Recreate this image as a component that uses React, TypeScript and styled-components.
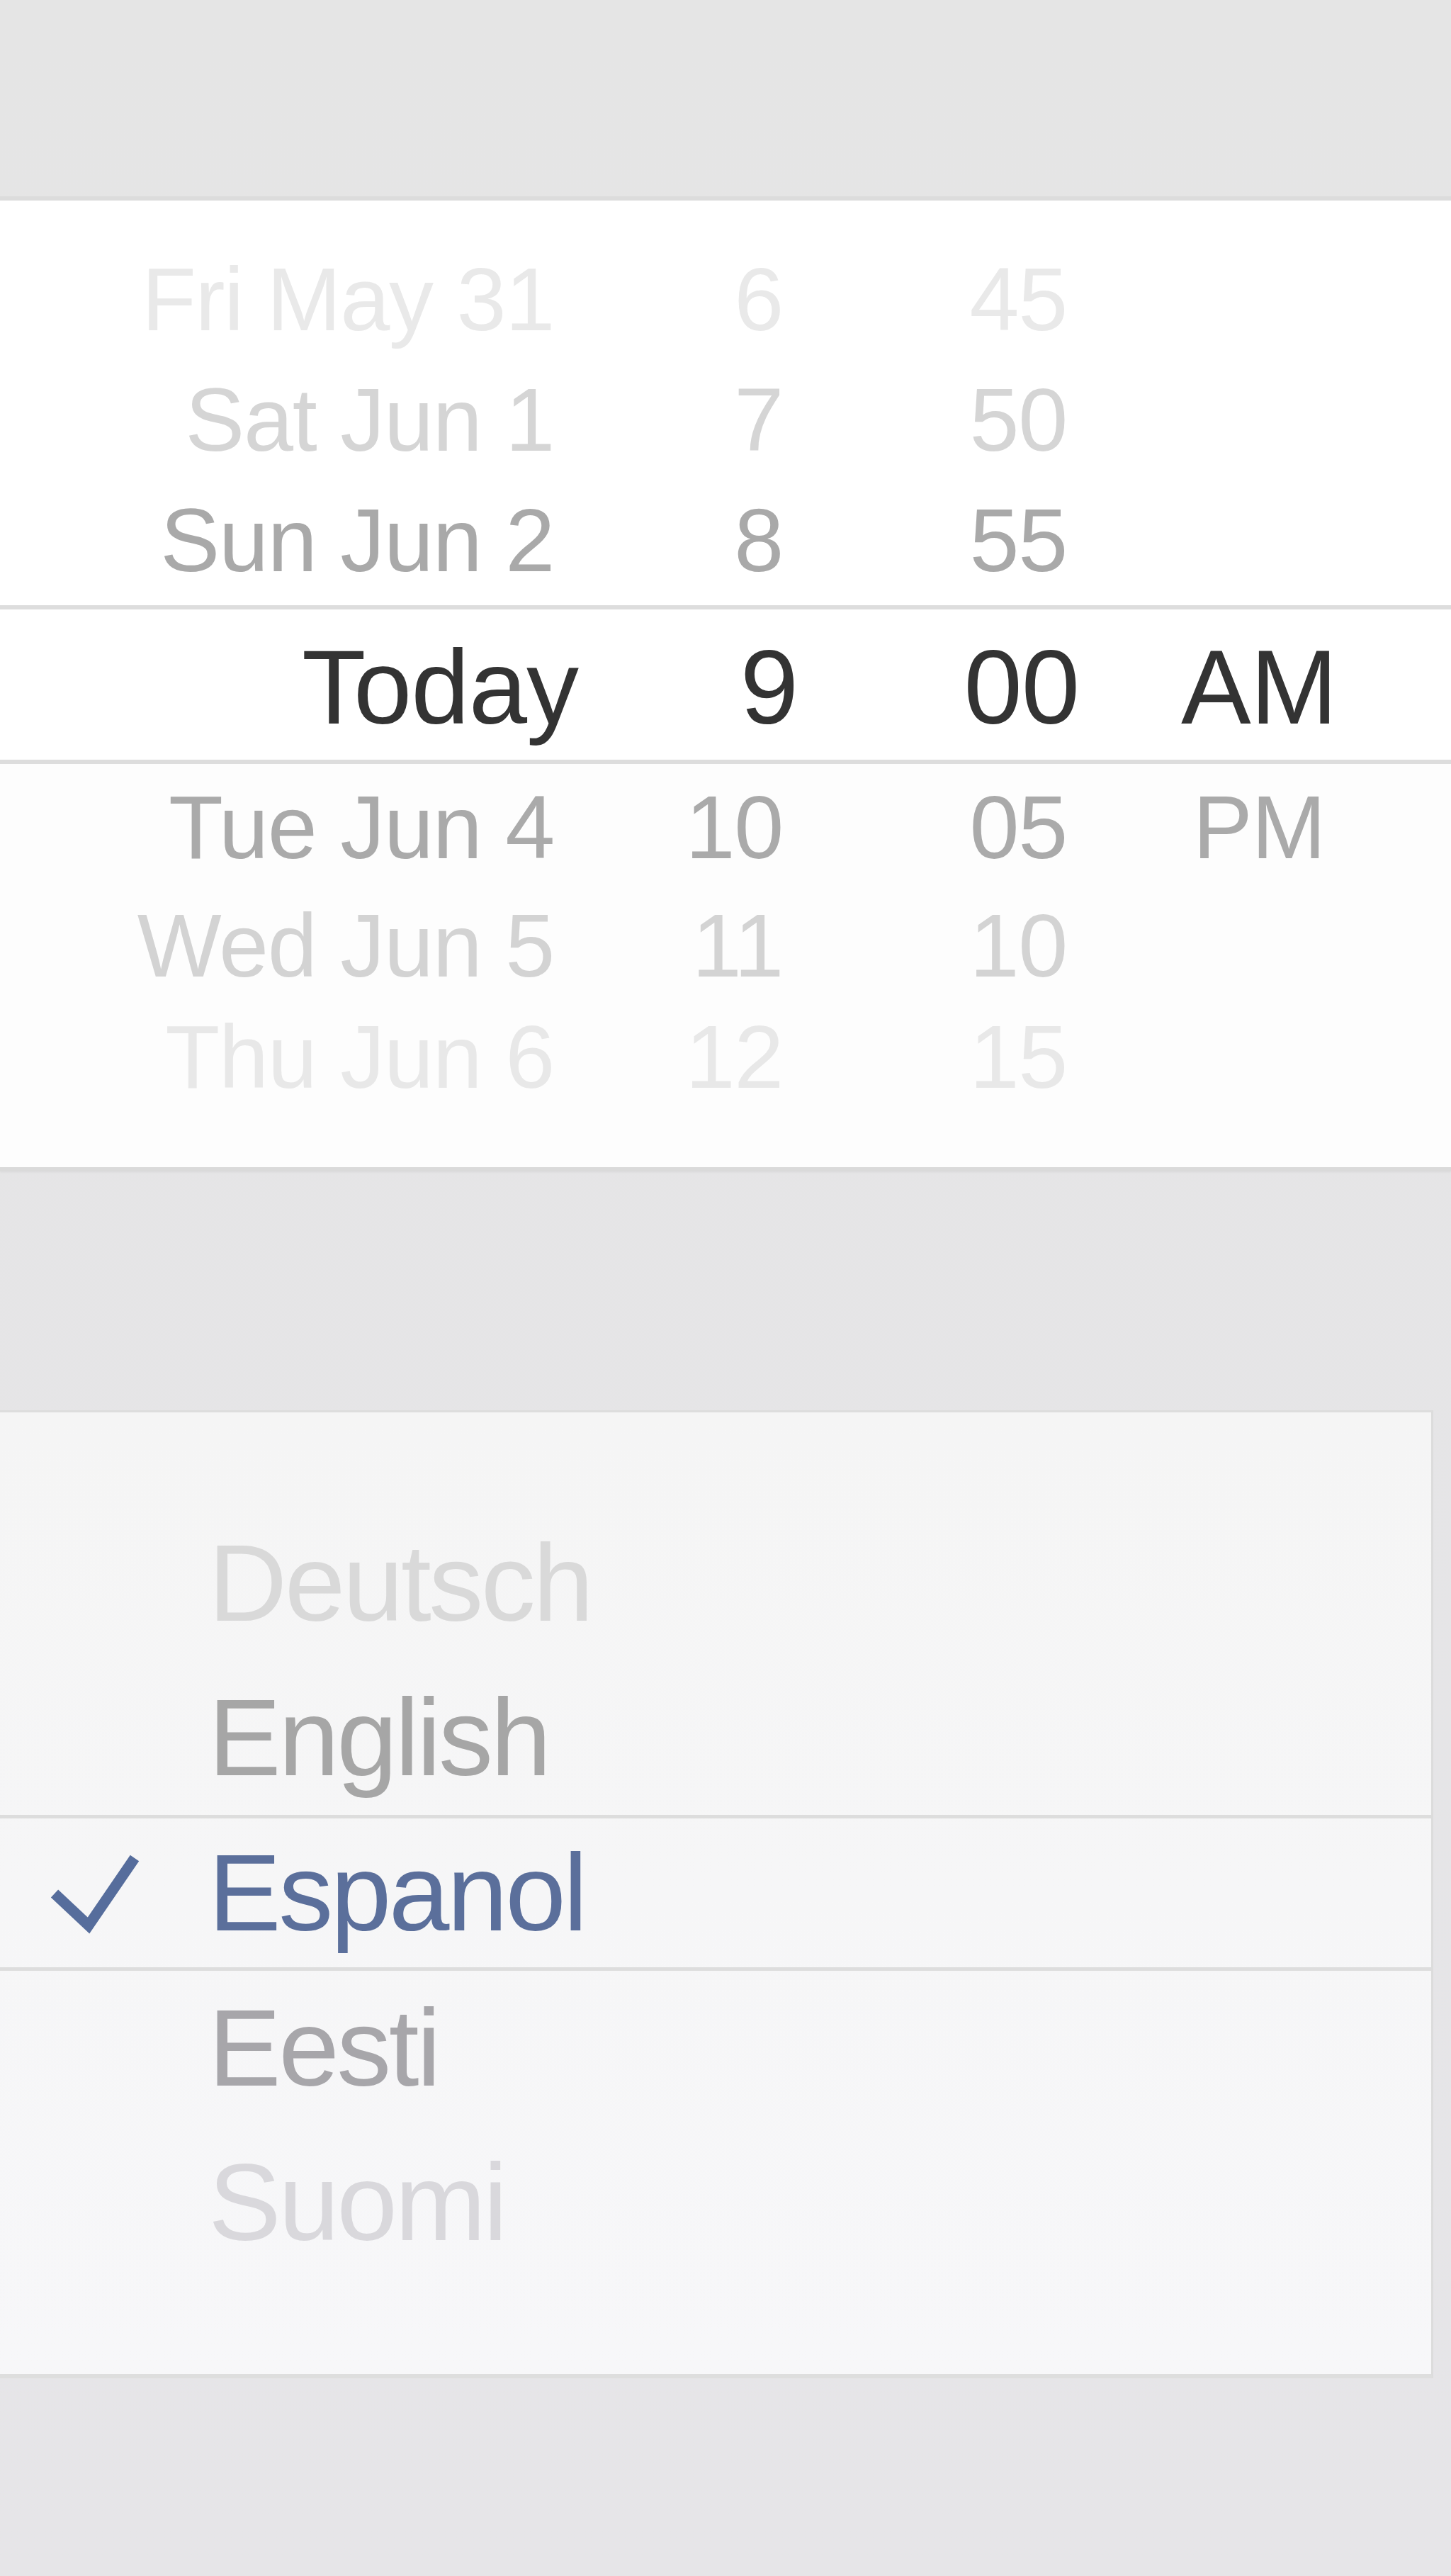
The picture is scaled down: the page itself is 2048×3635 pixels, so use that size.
import styled, { createGlobalStyle } from 'styled-components';

const GlobalStyle = createGlobalStyle`
    html, body {
        margin: 0;
        padding: 0;
        background: #e5e5e6;
    }
    #root {
        font-family: 'Liberation Sans', Arial, Helvetica, sans-serif;
    }
`;

const Page = styled.div`
    display: flex;
    flex-direction: column;
    width: 2048px;
    min-height: 3635px;
    background: linear-gradient(#e5e5e5, #e6e5e8);
`;

const Gap = styled.div<{ $h: number }>`
    height: ${(p) => p.$h}px;
    flex-shrink: 0;
`;

/* date / time wheel */

const Picker = styled.div`
    box-sizing: border-box;
    height: 1376px;
    display: flex;
    flex-direction: column;
    background: #ffffff;
    border-top: 6px solid #dcdcdc;
    border-bottom: 6px solid #dadada;
    box-shadow: 0 2px 2px rgba(0, 0, 0, 0.03);
`;

const WheelRow = styled.div<{ $h: number; $pt?: number }>`
    box-sizing: border-box;
    height: ${(p) => p.$h}px;
    padding-top: ${(p) => p.$pt || 0}px;
    display: grid;
    grid-template-columns: 782px 323px 401px 1fr;
    align-items: center;
    flex-shrink: 0;
`;

const Band = styled.div`
    border-top: 6px solid #dddddd;
    border-bottom: 6px solid #dddddd;
    background: #ffffff;
`;

const Lower = styled.div`
    flex: 1;
    display: flex;
    flex-direction: column;
    background: #fdfdfd;
`;

const Cell = styled.div<{ $tone: string; $big?: boolean; $shift?: number; $center?: boolean }>`
    font-size: ${(p) => (p.$big ? 148 : 126)}px;
    line-height: 1;
    letter-spacing: ${(p) => (p.$big ? -1 : -1.3)}px;
    color: ${(p) => p.$tone};
    text-align: ${(p) => (p.$center ? 'center' : 'right')};
    white-space: nowrap;
    transform: translateX(${(p) => p.$shift || 0}px);
`;

type Wheel = { date: string; hour: string; min: string; ampm?: string; tone: string; h: number };

const upper: Wheel[] = [
    { date: 'Fri May 31', hour: '6', min: '45', tone: '#e9e9e9', h: 170 },
    { date: 'Sat Jun 1', hour: '7', min: '50', tone: '#d5d5d5', h: 170 },
    { date: 'Sun Jun 2', hour: '8', min: '55', tone: '#a9a9a9', h: 170 },
];

const lower: Wheel[] = [
    { date: 'Tue Jun 4', hour: '10', min: '05', ampm: 'PM', tone: '#aaaaaa', h: 180 },
    { date: 'Wed Jun 5', hour: '11', min: '10', tone: '#d3d3d3', h: 154 },
    { date: 'Thu Jun 6', hour: '12', min: '15', tone: '#e8e8e8', h: 160 },
];

function WheelLine({ row }: { row: Wheel }) {
    return (
        <WheelRow $h={row.h}>
            <Cell $tone={row.tone}>{row.date}</Cell>
            <Cell $tone={row.tone}>{row.hour}</Cell>
            <Cell $tone={row.tone}>{row.min}</Cell>
            <Cell $tone={row.tone} $center>{row.ampm || ''}</Cell>
        </WheelRow>
    );
}

/* language list */

const LangPanel = styled.div`
    box-sizing: border-box;
    width: 2023px;
    height: 1366px;
    display: flex;
    flex-direction: column;
    padding: 132px 0 133px;
    background: linear-gradient(#f5f5f5, #f7f7f9);
    border-top: 3px solid #dddddd;
    border-right: 3px solid #dcdcdc;
    border-bottom: 6px solid #dedede;
`;

const LangRow = styled.div<{ $selected?: boolean }>`
    box-sizing: content-box;
    height: ${(p) => (p.$selected ? 210 : 218)}px;
    display: flex;
    align-items: center;
    flex-shrink: 0;
    border-top: ${(p) => (p.$selected ? '5px solid #dddddd' : 'none')};
    border-bottom: ${(p) => (p.$selected ? '5px solid #dddddd' : 'none')};
`;

const CheckSlot = styled.div`
    width: 294px;
    height: 130px;
    padding-left: 60px;
    box-sizing: border-box;
    display: flex;
    align-items: center;
`;

const LangLabel = styled.span<{ $tone: string }>`
    font-size: 154px;
    line-height: 1;
    letter-spacing: -3.5px;
    color: ${(p) => p.$tone};
`;

const Check = () => (
    <svg width="140" height="130" viewBox="0 0 140 130" fill="none">
        <path d="M17 66 L65 111 L130 16" stroke="#566d9c" strokeWidth="15" strokeLinejoin="miter" />
    </svg>
);

const langs = [
    { name: 'Deutsch', tone: '#d9d9d9' },
    { name: 'English', tone: '#a6a6a6' },
    { name: 'Espanol', tone: '#5b6f9b', selected: true },
    { name: 'Eesti', tone: '#a7a6aa' },
    { name: 'Suomi', tone: '#d9d8dc' },
];

export default function App() {
    return (
        <Page>
            <GlobalStyle />
            <Gap $h={277} />
            <Picker>
                <Gap $h={55} />
                {upper.map((r) => (
                    <WheelLine key={r.date} row={r} />
                ))}
                <Gap $h={6} />
                <Band>
                    <WheelRow $h={212} $pt={8}>
                        <Cell $tone="#333333" $big $shift={34}>Today</Cell>
                        <Cell $tone="#333333" $big $shift={21}>9</Cell>
                        <Cell $tone="#333333" $big $shift={17}>00</Cell>
                        <Cell $tone="#333333" $big $center>AM</Cell>
                    </WheelRow>
                </Band>
                <Lower>
                    {lower.map((r) => (
                        <WheelLine key={r.date} row={r} />
                    ))}
                </Lower>
            </Picker>
            <Gap $h={337} />
            <LangPanel>
                {langs.map((l) => (
                    <LangRow key={l.name} $selected={l.selected}>
                        <CheckSlot>{l.selected && <Check />}</CheckSlot>
                        <LangLabel $tone={l.tone}>{l.name}</LangLabel>
                    </LangRow>
                ))}
            </LangPanel>
        </Page>
    );
}
